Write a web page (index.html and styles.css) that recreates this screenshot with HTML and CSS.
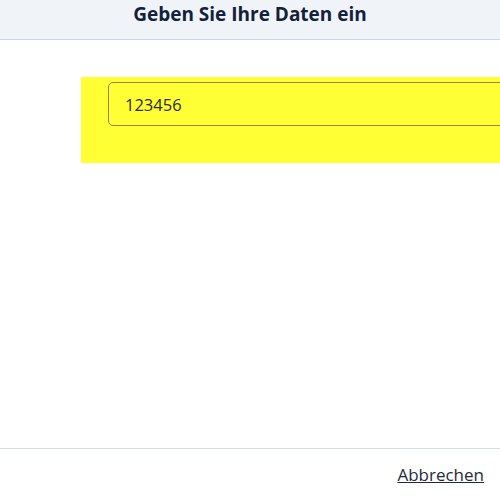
FILE: index.html
```html
<!DOCTYPE html>
<html lang="de">
<head>
<meta charset="utf-8">
<link rel="stylesheet" href="styles.css">
</head>
<body>
<div class="dialog">
  <header class="head"><h1 class="title">Geben Sie Ihre Daten ein</h1></header>
  <main class="body">
    <div class="field-box">
      <input class="field" type="text" value="123456">
    </div>
  </main>
  <footer class="foot"><a class="cancel" href="#">Abbrechen</a></footer>
</div>
</body>
</html>
```
FILE: styles.css
```css
html, body { margin: 0; padding: 0; background: #fff; }
body { font-family: "Open Sans", "Noto Sans", sans-serif; color: #212529; }
.dialog { width: 500px; height: 500px; display: flex; flex-direction: column; overflow: hidden; }
.head { height: 39px; background: #f0f4f8; border-bottom: 1px solid #c9d6e4; display: flex; align-items: center; justify-content: center; box-sizing: content-box; }
.title { margin: 0; font-size: 19px; font-weight: 700; color: #14213a; line-height: 1; padding-bottom: 11px; padding-left: 0px; }
.body { flex: 1; padding: 37px 0 0 81px; border-bottom: 1px solid #d5dde8; }
.field-box { background: #ffff33; height: 86px; width: 460px; padding: 5px 0 0 27px; box-sizing: border-box; }
.field { display: block; width: 420px; height: 44px; box-sizing: border-box; border: 1px solid #8a8a4c; border-radius: 5px; background: transparent; padding: 0 16px; font-family: inherit; font-size: 16.5px; color: #2b2b2b; outline: none; }
.foot { height: 51px; display: flex; justify-content: flex-end; align-items: center; padding-right: 16px; }
.cancel { color: #1f2a3a; font-size: 17px; text-decoration: underline; }
```
